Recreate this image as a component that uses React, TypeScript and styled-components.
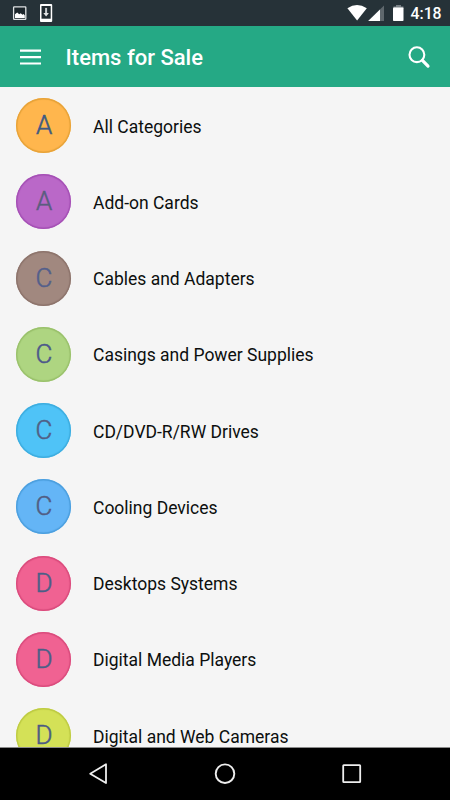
import React from 'react';
import styled, { createGlobalStyle } from 'styled-components';

const GlobalStyle = createGlobalStyle`
  * { box-sizing: border-box; }
  body { margin: 0; background: #f5f5f5; }
`;

const Screen = styled.div`
  width: 450px;
  height: 800px;
  display: flex;
  flex-direction: column;
  overflow: hidden;
  background: #f5f5f5;
  font-family: Roboto, 'Liberation Sans', sans-serif;
`;

const StatusBar = styled.header`
  flex: none;
  height: 26px;
  display: flex;
  justify-content: space-between;
  background: #263238;
`;

const StatusGroup = styled.div`
  display: flex;
`;

const Clock = styled.time`
  width: 39.5px;
  padding-top: 1px;
  font-size: 15.8px;
  font-weight: 500;
  line-height: 26px;
  color: #fff;
  white-space: nowrap;
`;

const Toolbar = styled.div`
  flex: none;
  height: 61px;
  display: flex;
  align-items: center;
  padding: 0 16px 0 18px;
  background: #25a985;
`;

const IconButton = styled.button`
  flex: none;
  display: flex;
  padding: 0;
  border: 0;
  background: none;
`;

const Title = styled.h1`
  flex: 1;
  margin: 2px 0 0 22.6px;
  font-size: 22px;
  font-weight: 500;
  line-height: 28px;
  color: #fff;
`;

const List = styled.ul`
  flex: 1;
  min-height: 0;
  overflow: hidden;
  margin: 0;
  padding: 0.4px 0 0;
  list-style: none;
`;

const Row = styled.li`
  height: 76.27px;
  display: flex;
  align-items: center;
  padding-left: 16px;
`;

const Avatar = styled.span<{ $fill: string; $edge: string; $ink: string }>`
  display: flex;
  align-items: center;
  justify-content: center;
  width: 55px;
  height: 55px;
  padding: 0 0 1px 1px;
  border-radius: 50%;
  box-shadow: inset 0 0 1px 1.4px ${(p) => p.$edge};
  background: ${(p) => p.$fill};
  color: ${(p) => p.$ink};
  font-size: 26px;
  font-weight: 300;
  line-height: 22px;
  -webkit-text-stroke: 0.5px ${(p) => p.$ink};
`;

const Label = styled.span`
  margin: 2.2px 0 0 22px;
  font-size: 17.5px;
  line-height: 22px;
  color: #0c0f0e;
  white-space: nowrap;
`;

const NavBar = styled.nav`
  flex: none;
  height: 53px;
  display: flex;
  justify-content: center;
  gap: 97px;
  padding-top: 11px;
  border-top: 1px solid #8a8a8a;
  background: #000;
`;

const categories = [
  { name: 'All Categories', fill: '#ffb64d', edge: '#e6a238', ink: '#3e5a82' },
  { name: 'Add-on Cards', fill: '#ba68c8', edge: '#a44fb4', ink: '#5b5d7f' },
  { name: 'Cables and Adapters', fill: '#a1887f', edge: '#8c736b', ink: '#535f8b' },
  { name: 'Casings and Power Supplies', fill: '#aed581', edge: '#99c06b', ink: '#4c588a' },
  { name: 'CD/DVD-R/RW Drives', fill: '#4fc3f7', edge: '#3cacde', ink: '#515f85' },
  { name: 'Cooling Devices', fill: '#64b5f6', edge: '#4b9edd', ink: '#515d84' },
  { name: 'Desktops Systems', fill: '#f06292', edge: '#d94b7c', ink: '#4a5f87' },
  { name: 'Digital Media Players', fill: '#f06292', edge: '#d94b7c', ink: '#4a5f87' },
  { name: 'Digital and Web Cameras', fill: '#d4e157', edge: '#bdca43', ink: '#4b5a83' },
];

const NotificationIcons = () => (
  <svg width="60" height="26" viewBox="0 0 60 26" aria-hidden="true">
    <rect x="13.6" y="6.8" width="12.2" height="12.6" rx=".6" fill="#1c262b" stroke="#dfe2e3" strokeWidth="1.3" />
    <path d="M15 17.9v-3.6l2.2-1.7 2 1.7 1.5-1 1.8 1.4 1.2-.6 1.1 1.3v2.5z" fill="#fff" />
    <rect x="40" y="4" width="12.2" height="18" rx="1" fill="#fff" />
    <rect x="41.5" y="6" width="9.2" height="12.7" fill="#202b30" />
    <path d="M46.1 7.9v6.6" stroke="#c9cdcf" strokeWidth="2" />
    <path d="M43.3 13h5.6l-2.8 3.4z" fill="#e1e3e4" />
  </svg>
);

const SystemIcons = () => (
  <svg width="63.5" height="26" viewBox="347 0 63.5 26" aria-hidden="true">
    <path d="M347.4 8.2Q357 1.8 366.8 8.2L357.1 20.6z" fill="#fff" />
    <path d="M384 5.5V21h-15.8z" fill="#5f686d" />
    <path d="M380 9.4V21h-11.8z" fill="#fff" />
    <path d="M396 5h5v1.6h2.5V8h-10V6.6h2.5z" fill="#788085" />
    <rect x="393" y="7.5" width="10.5" height="13.5" rx=".8" fill="#fff" />
  </svg>
);

const MenuIcon = () => (
  <svg width="25" height="24" viewBox="0 0 25 24">
    <path d="M2 5.6h21M2 12.1h21M2 18.5h21" stroke="#fff" strokeWidth="2.2" />
  </svg>
);

const SearchIcon = () => (
  <svg width="28" height="28" viewBox="406 42.5 28 28" fill="none" stroke="#fff">
    <circle cx="416.9" cy="54.2" r="7.4" strokeWidth="2.1" />
    <path d="m422.4 59.9 5.6 5.7" strokeWidth="3.2" strokeLinecap="round" />
  </svg>
);

const BackIcon = () => (
  <svg width="30" height="30" viewBox="0 0 30 30" fill="none" stroke="#eee" strokeWidth="1.8" strokeLinejoin="round">
    <path d="M23 5.3v18.8L7.2 14.7z" />
  </svg>
);

const HomeIcon = () => (
  <svg width="30" height="30" viewBox="0 0 30 30" fill="none" stroke="#eee" strokeWidth="1.9">
    <circle cx="15" cy="14.7" r="9.3" />
  </svg>
);

const RecentsIcon = () => (
  <svg width="30" height="30" viewBox="0 0 30 30" fill="none" stroke="#eee" strokeWidth="1.8">
    <rect x="6.2" y="6.2" width="17" height="17" rx=".6" />
  </svg>
);

export default function App() {
  return (
    <Screen>
      <GlobalStyle />
      <StatusBar>
        <NotificationIcons />
        <StatusGroup>
          <SystemIcons />
          <Clock>4:18</Clock>
        </StatusGroup>
      </StatusBar>
      <Toolbar>
        <IconButton aria-label="Menu"><MenuIcon /></IconButton>
        <Title>Items for Sale</Title>
        <IconButton aria-label="Search"><SearchIcon /></IconButton>
      </Toolbar>
      <List>
        {categories.map((c) => (
          <Row key={c.name}>
            <Avatar $fill={c.fill} $edge={c.edge} $ink={c.ink}>{c.name[0]}</Avatar>
            <Label>{c.name}</Label>
          </Row>
        ))}
      </List>
      <NavBar>
        <IconButton aria-label="Back"><BackIcon /></IconButton>
        <IconButton aria-label="Home"><HomeIcon /></IconButton>
        <IconButton aria-label="Recents"><RecentsIcon /></IconButton>
      </NavBar>
    </Screen>
  );
}
